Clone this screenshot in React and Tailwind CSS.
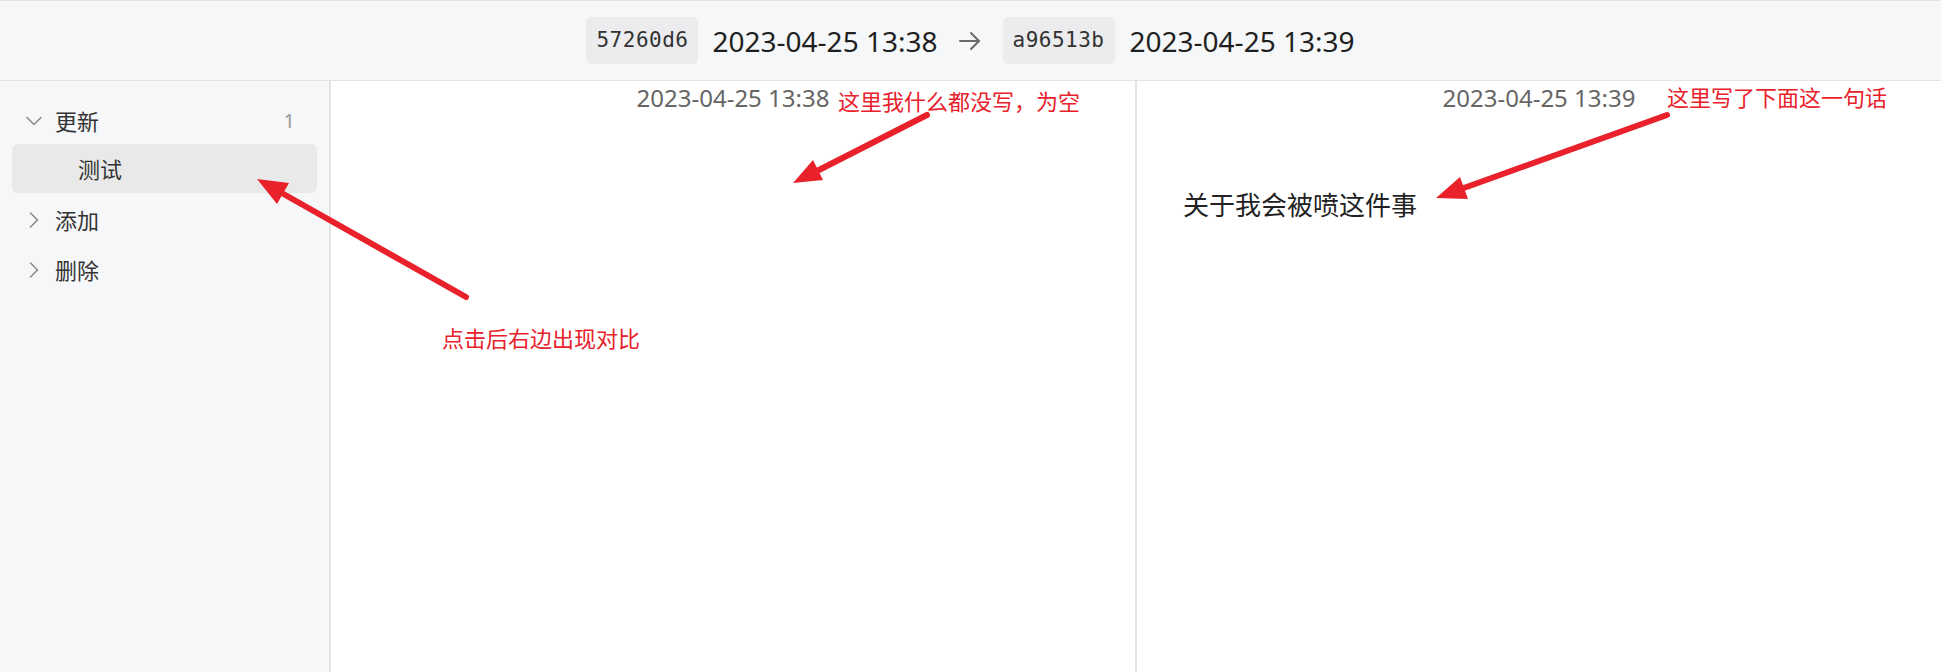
import { ChevronDown, ChevronRight } from 'lucide-react'

const sans = "font-['Noto_Sans','Noto_Sans_CJK_SC',sans-serif]"

function Hash({ children }) {
  return (
    <span className="h-[47px] w-[112px] rounded-[5px] bg-[#ececee] flex items-center justify-center font-['DejaVu_Sans_Mono',monospace] text-[21px] tracking-[0.5px] text-[#333]">
      {children}
    </span>
  )
}

function Caret({ open }) {
  return (
    <span className="w-[28px] h-[28px] shrink-0 flex items-center justify-center text-[#8a8a8a] mr-[7px]">
      {open ? (
        <ChevronDown className="shrink-0" size={28} strokeWidth={1.3} />
      ) : (
        <ChevronRight className="shrink-0" size={28} strokeWidth={1.3} />
      )}
    </span>
  )
}

function TreeRow({ open, label, count, selected, child }) {
  return (
    <div
      className={
        'mx-[12px] rounded-[6px] flex items-center pr-[22px] ' +
        (selected ? 'bg-[#e8e9e8] h-[49px] pl-[66px]' : 'h-[50px] pl-[8px]')
      }
    >
      {!child && <Caret open={open} />}
      <span className="text-[22px] text-[#333] leading-none">{label}</span>
      {count && <span className="ml-auto text-[20px] text-[#9a9a9a] leading-none">{count}</span>}
    </div>
  )
}

function RedArrow({ tail, base, tip, w1, w2 }) {
  return (
    <g>
      <line x1={tail[0]} y1={tail[1]} x2={base[0]} y2={base[1]} stroke="#e8212b" strokeWidth="6" strokeLinecap="round" />
      <polygon points={`${tip[0]},${tip[1]} ${w1[0]},${w1[1]} ${w2[0]},${w2[1]}`} fill="#e8212b" />
    </g>
  )
}

export default function App() {
  return (
    <div className={`${sans} relative h-[672px] w-full flex flex-col bg-white overflow-hidden`}>
      {/* top bar: commit compare */}
      <header className="h-[81px] shrink-0 border-t border-b border-[#e3e4e6] bg-[#f6f7f9] flex items-center justify-center">
        <Hash>57260d6</Hash>
        <span className="ml-[14px] text-[28px] text-[#1f1f1f] leading-none">2023-04-25 13:38</span>
        <svg className="ml-[21px]" width="22" height="20" viewBox="0 0 22 20" fill="none" stroke="#6b6b6b" strokeWidth="2" strokeLinecap="round" strokeLinejoin="round">
          <path d="M1 10H20" />
          <path d="M12 2l8 8-8 8" />
        </svg>
        <span className="ml-[22px]"><Hash>a96513b</Hash></span>
        <span className="ml-[15px] text-[28px] text-[#1f1f1f] leading-none">2023-04-25 13:39</span>
      </header>

      <div className="flex flex-1 min-h-0">
        {/* sidebar tree */}
        <aside className="w-[331px] shrink-0 bg-[#f6f7f9] border-r-2 border-[#e3e4e6] pt-[16px] flex flex-col">
          <div className="h-[47px] mx-[12px] flex items-center pl-[8px] pr-[22px]">
            <Caret open />
            <span className="text-[22px] text-[#333] leading-none">更新</span>
            <span className="ml-auto text-[20px] text-[#9a9a9a] leading-none">1</span>
          </div>
          <TreeRow child selected label="测试" />
          <div className="h-[2px]" />
          <TreeRow label="添加" />
          <TreeRow label="删除" />
        </aside>

        {/* old version */}
        <section className="flex-1 flex flex-col">
          <div className="h-[34px] flex items-center justify-center text-[24px] text-[#666] leading-none">2023-04-25 13:38</div>
        </section>

        <div className="w-[2px] bg-[#e3e4e6]" />

        {/* new version */}
        <section className="flex-1 flex flex-col">
          <div className="h-[34px] flex items-center justify-center text-[24px] text-[#666] leading-none">2023-04-25 13:39</div>
          <p className="mt-[73px] pl-[46px] text-[26px] leading-[34px] text-[#222]">关于我会被喷这件事</p>
        </section>
      </div>

      {/* screenshot annotations */}
      <span className="absolute left-[838px] top-[86px] text-[22px] leading-[30px] text-[#e8212b]">这里我什么都没写，为空</span>
      <span className="absolute left-[1667px] top-[82px] text-[22px] leading-[30px] text-[#e8212b]">这里写了下面这一句话</span>
      <span className="absolute left-[442px] top-[323px] text-[22px] leading-[30px] text-[#e8212b]">点击后右边出现对比</span>
      <svg className="absolute inset-0 pointer-events-none" width="1941" height="672">
        <RedArrow tail={[466, 297]} base={[280, 192]} tip={[257, 179]} w1={[289, 183]} w2={[277, 204]} />
        <RedArrow tail={[927, 115]} base={[815, 172]} tip={[793, 183]} w1={[813, 160]} w2={[823, 180]} />
        <RedArrow tail={[1667, 115]} base={[1461, 189]} tip={[1436, 198]} w1={[1460, 177]} w2={[1468, 199]} />
      </svg>
    </div>
  )
}
